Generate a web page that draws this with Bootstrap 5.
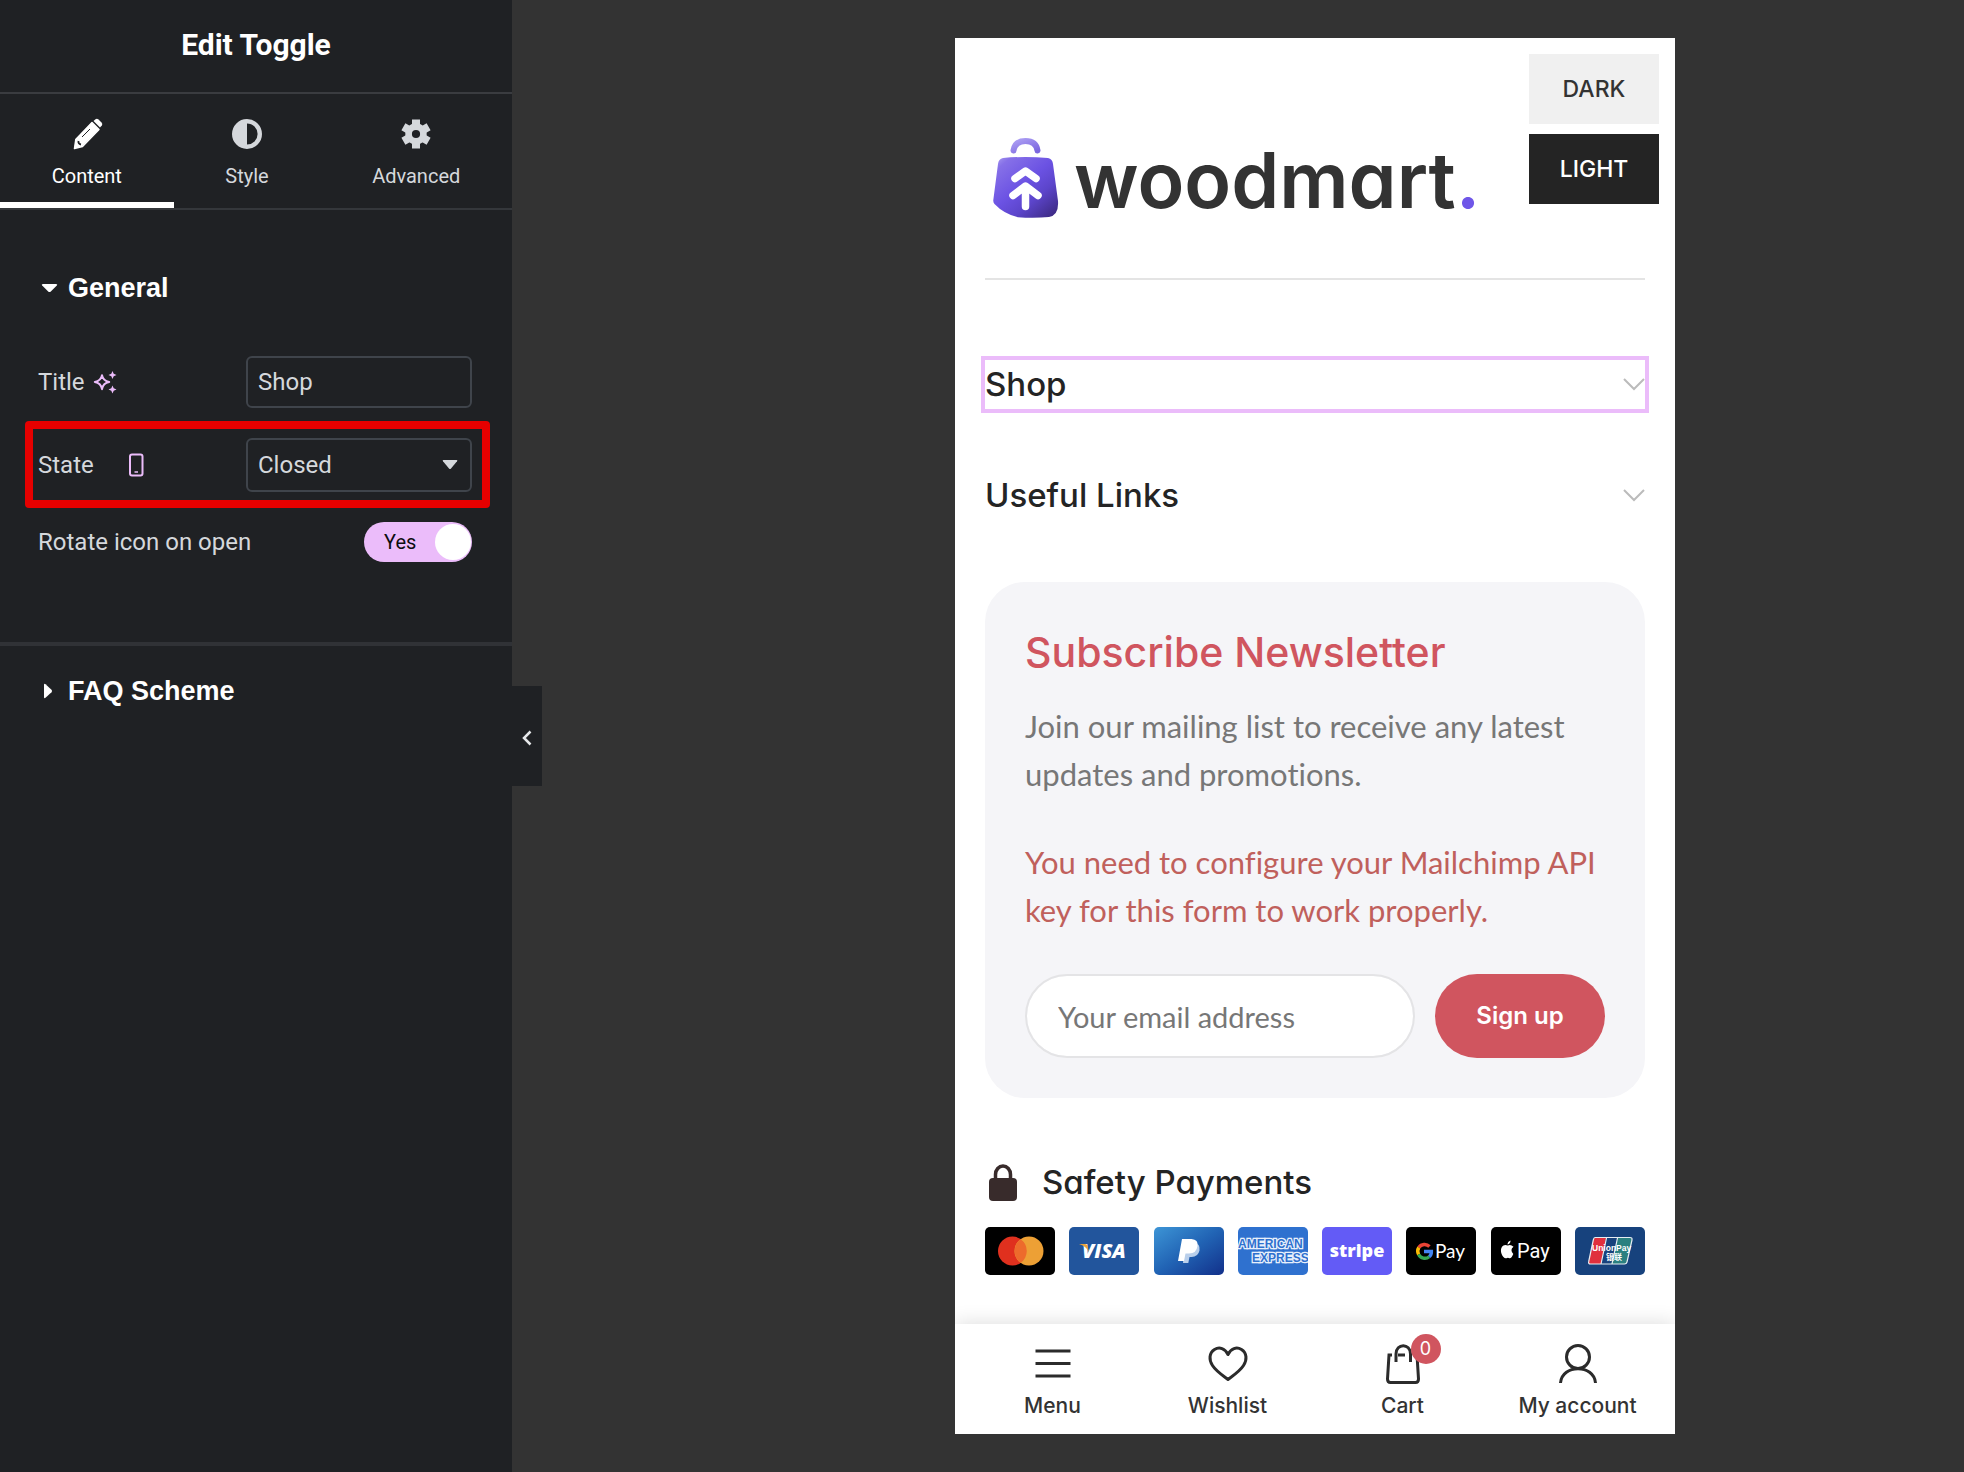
<!DOCTYPE html>
<html lang="en">
<head>
<meta charset="utf-8">
<meta name="viewport" content="width=device-width, initial-scale=1">
<title>Edit Toggle</title>
<link rel="stylesheet" href="https://cdn.jsdelivr.net/npm/bootstrap@5.3.0/dist/css/bootstrap.min.css">
<style>
  body { background: #333; font-family: Lato, sans-serif; }

  /* editor panel */
  .panel { width: 512px; background: #1f2124; color: #d5d8dc; font: 24px/32px Roboto, sans-serif; z-index: 2; }
  .panel-head { height: 94px; padding-bottom: 2px; border-bottom: 2px solid #3a3c40; }
  .panel-head h1 { font-size: 30px; line-height: 36px; }
  .panel-tabs { border-bottom: 2px solid #34373b; }
  .panel-tabs .nav-link { height: 114px; padding: 23px 20px 0; border-bottom: 6px solid transparent; border-radius: 0; color: #d5d8dc; font-size: 20px; line-height: 24px; }
  .panel-tabs .nav-link.active { border-color: #fff; background: none; color: #fff; }
  .panel-tabs svg { width: 34px; height: 34px; margin-bottom: 13px; }
  .fold { padding: 0 40px; height: 90px; gap: 9px; border: 0; background: none; color: #fff; font: bold 27px/32px "Liberation Sans", Arial, sans-serif; }
  .fold svg { width: 19px; height: 18px; }
  .setting { padding: 0 40px 0 38px; }
  .first { padding-top: 23px; }
  .field { width: 226px; height: 52px; padding: 0 10px; border: 2px solid #3f444b; border-radius: 6px; background-color: transparent; color: #d5d8dc; font-size: 24px; line-height: 32px; box-shadow: none; }
  .field:focus { background-color: transparent; color: #d5d8dc; box-shadow: none; }
  select.field { height: 54px; background: url("data:image/svg+xml,%3Csvg xmlns='http://www.w3.org/2000/svg' viewBox='0 0 16 10'%3E%3Cpath d='M1.5 0h13q1.5 0 .5 1.300L9 8.500q-1 1-2 0L1 1.300Q0 0 1.500 0z' fill='%23d5d8dc'/%3E%3C/svg%3E") no-repeat right 12px center / 16px 10px; }
  select.field:focus { background-color: transparent; }
  .hilite { margin: 13px 22px 14px 25px; padding: 9px 10px 8px 5px; border: 8px solid #e60000; border-radius: 4px; }
  .switcher input { width: 108px; height: 40px; margin: 0; border: 0; border-radius: 20px; background: #ebbcfa; appearance: none; display: block; }
  .switcher .knob { right: 1px; top: 2px; width: 36px; height: 36px; background: #fff; }
  .switcher .word { left: 20px; top: 6px; font-size: 20px; line-height: 28px; color: #0c0d0e; }
  .general { padding-top: 33px; border-bottom: 4px solid #303236; padding-bottom: 80px; }
  .collapser { left: 100%; top: 686px; width: 30px; height: 100px; background: #1f2124; border: 0; }

  /* preview */
  .canvas { padding: 38px 0 38px 154px; }
  .phone { max-width: 720px; background: #fff; color: #242424; }
  .scheme { top: 16px; right: 16px; width: 130px; gap: 10px; z-index: 1; }
  .scheme button { height: 70px; border: 0; font: 500 23px/28px Inter, sans-serif; }
  .btn-pale { background: #f0f0f0; color: #333; }
  .btn-ink { background: #242424; color: #fff; }
  .page-body { padding: 100px 30px 49px; }
  .brand-row { height: 80px; padding-left: 8px; gap: 15px; color: #333; }
  .brand-row span { padding-top: 4px; font: 600 77px/80px Inter, sans-serif; font-feature-settings: "cv11"; }
  .brand-row b { color: #6f56e8; font-weight: inherit; }
  .rule { margin: 60px 0 80px; height: 2px; background: #e4e4e4; }
  .round { font-family: Inter, sans-serif; font-feature-settings: "cv11"; font-weight: 500; }
  .fold-row { height: 49px; margin-bottom: 62px; padding: 0; border: 0; background: none; color: #242424; font-size: 33px; line-height: 49px; }
  .fold-row svg { width: 22px; height: 13px; }
  .fold-row.picked { outline: 4px solid #ebbcfa; }
  .news { padding: 40px; border-radius: 40px; background: #f5f5f8; margin-bottom: 61px; font-size: 31px; line-height: 48px; color: #777; font-variant-ligatures: no-common-ligatures; }
  .news h2 { margin-bottom: 20px; color: #d0555f; font-size: 41px; line-height: 60px; }
  .news p { margin-bottom: 40px; }
  .news .warn { color: #c0605c; }
  .news form { gap: 20px; }
  .news input { height: 84px; padding: 0 31px; border: 2px solid #e4e4e6; border-radius: 42px; font-size: 29px; color: #777; }
  .news input::placeholder { color: #777; }
  .news button { width: 170px; height: 84px; border: 0; border-radius: 42px; background: #d0555f; color: #fff; font: 600 24px/30px Inter, sans-serif; }
  .safe { height: 46px; margin-bottom: 22px; padding-left: 4px; gap: 25px; font-size: 33px; line-height: 46px; }
  .safe svg { width: 28px; height: 37px; }
  .pays { gap: 14px; }
  .pays svg { width: 70px; height: 48px; }
  .dock { height: 110px; padding: 18px 10px 0; box-shadow: 0 -2px 18px rgba(0,0,0,.12); clip-path: inset(-30px 0 0 0); background: #fff; }
  .dock a { color: #333; font: 500 21px/28px Inter, sans-serif; gap: 6px; }
  .dock svg { width: 44px; height: 44px; }
  .dock .count { left: 30px; top: -8px; width: 30px; height: 30px; background: #d0555f; color: #fff; font: 18px/30px Inter, sans-serif; }
</style>
</head>
<body>
<div class="d-flex min-vh-100">
  <aside class="panel position-relative flex-shrink-0">
    <header class="panel-head d-flex align-items-center justify-content-center"><h1 class="m-0 fw-bold text-white">Edit Toggle</h1></header>
    <nav class="panel-tabs nav nav-fill flex-nowrap">
      <a class="nav-link active nav-item d-flex flex-column align-items-center" href="#">
        <svg viewBox="0 0 34 34"><path d="M4.500 31.500 5.500 22 22 5.500l7 7L12 29.500z" fill="#fff"/><path d="M4.500 31.500 5.800 22.500 22 5.500l7 7L12.500 29.500z" fill="none" stroke="#fff" stroke-width="1.500" stroke-linejoin="round"/><path d="m23.500 4 2-1.800q1.500-1 3 .3l3 3q1.500 1.500.3 3L30 10.500z" fill="#fff"/><path d="m12 20 8-8" stroke="#1f2124" stroke-width="1" /><path d="M8.500 24q-.5 3 2.500 3.500" fill="none" stroke="#1f2124" stroke-width="1.800"/></svg>
        Content</a>
      <a class="nav-link nav-item d-flex flex-column align-items-center" href="#">
        <svg viewBox="0 0 34 34"><circle cx="17" cy="17" r="12.800" fill="none" stroke="#d5d8dc" stroke-width="4.400"/><path d="M17 3a14 14 0 0 0 0 28z" fill="#d5d8dc"/></svg>
        Style</a>
      <a class="nav-link nav-item d-flex flex-column align-items-center" href="#">
        <svg viewBox="0 0 34 34" fill="none" stroke="#d5d8dc"><circle cx="17" cy="17" r="7.400" stroke-width="6.600"/><g stroke-width="8" stroke-linecap="butt"><path d="M17 2.500V9M17 25v6.500M4.400 9.750l5.600 3.250M24 21l5.600 3.250M4.400 24.250 10 21M24 13l5.600-3.250"/></g></svg>
        Advanced</a>
    </nav>
    <section class="general">
      <button class="fold d-flex align-items-center" type="button"><svg viewBox="0 0 19 18"><path d="M3 5h13q2 0 .8 1.500l-6 6q-1.300 1-2.600 0l-6-6Q1 5 3 5z" fill="#fff"/></svg>General</button>
      <div class="setting first d-flex align-items-center justify-content-between">
        <label for="title" class="d-flex align-items-center">Title <svg width="24" height="24" viewBox="0 0 24 24" class="ms-2"><path d="M9 5.200Q10 11 16.200 12 10 13 9 19.200 8 13 1.800 12 8 11 9 5.200z" fill="none" stroke="#ebbcfa" stroke-width="2" stroke-linejoin="round"/><path d="M19.500 1l1.200 2.800 2.800 1.200-2.800 1.200-1.200 2.800-1.200-2.800-2.800-1.200 2.800-1.200zM19.500 15.500l1.200 2.800 2.800 1.200-2.800 1.200-1.200 2.800-1.200-2.800-2.800-1.200 2.800-1.200z" fill="#ebbcfa"/></svg></label>
        <input class="field form-control" id="title" type="text" value="Shop">
      </div>
      <div class="hilite d-flex align-items-center justify-content-between">
        <label for="state" class="d-flex align-items-center">State <svg class="ms-4" width="34" height="24" viewBox="0 0 34 24"><rect x="12" y="1.500" width="12.500" height="21" rx="2" fill="none" stroke="#ebbcfa" stroke-width="2"/><path d="M16.500 19h3.500" stroke="#ebbcfa" stroke-width="1.500"/></svg></label>
        <select class="field form-select" id="state"><option>Closed</option><option>Open</option></select>
      </div>
      <div class="setting d-flex align-items-center justify-content-between">
        <label for="rotate">Rotate icon on open</label>
        <div class="switcher position-relative">
          <input id="rotate" type="checkbox" role="switch" checked>
          <span class="word position-absolute pe-none">Yes</span><span class="knob position-absolute rounded-circle pe-none"></span>
        </div>
      </div>
    </section>
    <button class="fold d-flex align-items-center" type="button"><svg viewBox="0 0 19 18"><path d="M4 3q0-2 1.500-.8l6 5.500q1.200 1.300 0 2.600l-6 5.500Q4 17 4 15z" fill="#fff"/></svg>FAQ Scheme</button>
    <button class="collapser position-absolute p-0" type="button" aria-label="Collapse panel"><svg width="12" height="18" viewBox="0 0 12 18"><path d="M9.500 2.500 3 9l6.500 6.500" fill="none" stroke="#e6e8ea" stroke-width="2.500"/></svg></button>
  </aside>

  <main class="canvas flex-grow-1">
    <div class="phone position-relative mx-auto">
      <div class="scheme position-absolute d-grid">
        <button class="btn-pale" type="button">DARK</button>
        <button class="btn-ink" type="button">LIGHT</button>
      </div>
      <div class="page-body">
        <div class="brand-row d-flex align-items-center">
          <svg class="flex-shrink-0" width="66" height="80" viewBox="0 0 66 80">
            <defs>
              <linearGradient id="bag" x1="0" y1="0" x2=".9" y2="1"><stop offset="0" stop-color="#b0a3f2"/><stop offset=".14" stop-color="#8670e8"/><stop offset=".48" stop-color="#6b52e3"/><stop offset=".7" stop-color="#5c45cb"/><stop offset="1" stop-color="#3d2a84"/></linearGradient>
              <linearGradient id="grip" x1="0" y1="0" x2="1" y2="1"><stop offset="0" stop-color="#ab9df3"/><stop offset="1" stop-color="#7c67df"/></linearGradient>
            </defs>
            <path d="M20.500 12.500C21.500 6 26 3 32.500 3s11 3 12 9.500" fill="none" stroke="url(#grip)" stroke-width="6" stroke-linecap="round"/>
            <path d="M5 26q.5-5 5-6 22-2 45 0 4.500 1 5 6l5 37q1 14-9 16-14 1.500-31 .3Q11 76 1.500 66 0 64.500.3 62z" fill="url(#bag)"/>
            <path d="M22 40.500 32.500 33 43 40.500M20 57.500 32.500 48 45 57.500M32.500 50v18.500" fill="none" stroke="#fff" stroke-width="7.500" stroke-linecap="round" stroke-linejoin="round"/>
          </svg>
          <span>woodmart<b>.</b></span>
        </div>
        <div class="rule"></div>
        <button class="fold-row round picked d-flex w-100 align-items-center justify-content-between" type="button">Shop <svg viewBox="0 0 22 13"><path d="m1 1 10 10L21 1" fill="none" stroke="#bbb" stroke-width="2"/></svg></button>
        <button class="fold-row round d-flex w-100 align-items-center justify-content-between" type="button">Useful Links <svg viewBox="0 0 22 13"><path d="m1 1 10 10L21 1" fill="none" stroke="#bbb" stroke-width="2"/></svg></button>
        <section class="news">
          <h2 class="round">Subscribe Newsletter</h2>
          <p>Join our mailing list to receive any latest updates and promotions.</p>
          <p class="warn">You need to configure your Mailchimp API key for this form to work properly.</p>
          <form class="d-flex">
            <input class="form-control flex-grow-1" type="email" placeholder="Your email address" aria-label="Your email address">
            <button class="flex-shrink-0" type="button">Sign up</button>
          </form>
        </section>
        <div class="safe round d-flex align-items-center">
          <svg viewBox="0 0 28 37"><path d="M6.500 15V10.500a7.500 8.500 0 0 1 15 0V15" fill="none" stroke="#382b2b" stroke-width="3.500"/><rect y="14" width="28" height="23" rx="4" fill="#382b2b"/></svg>
          Safety Payments
        </div>
        <div class="pays d-flex justify-content-between">
          <svg viewBox="0 0 70 48"><rect width="70" height="48" rx="5" fill="#000"/><circle cx="27.500" cy="24" r="14.500" fill="#e0301e"/><circle cx="44" cy="24" r="14.500" fill="#eda035"/><path d="M35.700 12.200a14.500 14.500 0 0 1 0 23.600 14.500 14.500 0 0 1 0-23.600z" fill="#ed6b2c"/></svg>
          <svg viewBox="0 0 70 48"><rect width="70" height="48" rx="5" fill="#22559c"/><text x="13" y="31" font-family="Open Sans" font-weight="800" font-style="italic" font-size="20" fill="#fff">VISA</text><path d="M10 17h6q2 0 2.500 2l1.500 6q-3-6-10-8z" fill="#e9a33a"/></svg>
          <svg viewBox="0 0 70 48"><defs><linearGradient id="pp" x1="0" y1="0" x2="1" y2="1"><stop offset="0" stop-color="#3d95d6"/><stop offset=".5" stop-color="#2163b4"/><stop offset="1" stop-color="#12308a"/></linearGradient></defs><rect width="70" height="48" rx="5" fill="url(#pp)"/><path d="M31 15.500h9q6.500 1 5.500 8-1.500 6.500-8 6.500h-2l-1.200 6H29z" fill="#b9cfeb"/><path d="M28 12h9.500q7 .5 6 7-1 7.500-8.500 7.500h-3.500L30 34h-6z" fill="#fff"/></svg>
          <svg viewBox="0 0 70 48"><defs><clipPath id="axc"><rect width="70" height="48" rx="5"/></clipPath></defs><g clip-path="url(#axc)"><rect width="70" height="48" fill="#2f71cf"/><g font-family="Liberation Sans" font-weight="bold" font-size="12" fill="#2f71cf" stroke="#e8f0fb" stroke-width="2.500" paint-order="stroke"><text x="0" y="21">AMERICAN</text><text x="14" y="35">EXPRESS</text></g></g></svg>
          <svg viewBox="0 0 70 48"><rect width="70" height="48" rx="5" fill="#635bf6"/><text x="35" y="30" text-anchor="middle" font-family="Open Sans" font-weight="800" font-size="18" fill="#fff">stripe</text></svg>
          <svg viewBox="0 0 70 48"><rect width="70" height="48" rx="5" fill="#000"/><g fill="none" stroke-width="3.400"><path d="M23.500 19.500a7 7 0 0 0-10.700 1" stroke="#ea4335"/><path d="M12.800 20.500a7 7 0 0 0-.2 7" stroke="#fbbc04"/><path d="M12.600 27.500a7 7 0 0 0 10.600 2.200" stroke="#34a853"/><path d="M23.200 29.700q2.300-2 2.200-5.200H18" stroke="#4285f4"/></g><text x="29" y="31" font-family="Lato" font-size="19" fill="#fff">Pay</text></svg>
          <svg viewBox="0 0 70 48"><rect width="70" height="48" rx="5" fill="#000"/><path d="M17 18.500q2.500-1.500 5.500 1.200-4 3-.2 7.300-1.800 4.500-3.800 4.200-1.600-.8-3.200 0C12 32 8 24 11 19.700q2-2.800 6-1.200zM16.500 17.500q0-3 3-4 .2 3-3 4z" fill="#fff"/><text x="26" y="31" font-family="Roboto" font-size="20" fill="#fff">Pay</text></svg>
          <svg viewBox="0 0 70 48"><rect width="70" height="48" rx="5" fill="#17427d"/><path d="M20 11h14l-6 26H15.500q-2.500 0-1.800-2.500l4.600-21.500q.5-2 1.700-2z" fill="#e0303d"/><path d="M31 11h14l-6 26H26z" fill="#17427d"/><path d="M43 11h12q2.500 0 2 2.500l-5 21.500q-.5 2-2.500 2H36z" fill="#2a8080"/><path d="M20 10.500h35q2.500 0 2 2.500l-5 22q-.5 2-2.500 2H15.500q-2.500 0-1.800-2.500l4.600-21.500q.5-2.500 1.700-2.500zM31.500 11 26 37M42.500 11 37 37" fill="none" stroke="#e6edf2" stroke-width="1.200"/><text x="17" y="24" font-family="Liberation Sans" font-weight="bold" font-size="8.500" fill="#fff">UnionPay</text><text x="31" y="33" font-family="Noto Sans CJK SC" font-weight="bold" font-size="8" fill="#fff">银联</text></svg>
        </div>
      </div>
      <nav class="dock d-flex position-relative">
        <a class="d-flex flex-column align-items-center flex-fill w-25 text-decoration-none" href="#"><svg viewBox="0 0 44 44" fill="none" stroke="#2b2b2b" stroke-width="3"><path d="M4.500 9h35M4.500 21.500h35M4.500 34h35"/></svg>Menu</a>
        <a class="d-flex flex-column align-items-center flex-fill w-25 text-decoration-none" href="#"><svg viewBox="0 0 44 44" fill="none" stroke="#2b2b2b" stroke-width="3" stroke-linejoin="round"><path d="M22 12.500C19 6.500 13.500 4.500 8.500 7.500 3 11 2.800 18 6.500 23.500 10 29 16 33 22 37.500c6-4.500 12-8.500 15.500-14C41.200 18 41 11 35.500 7.500c-5-3-10.500-1-13.500 5z"/></svg>Wishlist</a>
        <a class="d-flex flex-column align-items-center flex-fill w-25 text-decoration-none" href="#"><span class="position-relative d-flex"><svg viewBox="0 0 44 44" fill="none" stroke="#2b2b2b" stroke-width="3"><path d="M11 13H8L6.500 37q0 3.500 3 3.500h25q3 0 3-3.500L36 13h-3M17 13h7M15 20v-8C15 1 29.500 1 29.500 12v8"/></svg><span class="count position-absolute rounded-circle text-center">0</span></span>Cart</a>
        <a class="d-flex flex-column align-items-center flex-fill w-25 text-decoration-none" href="#"><svg viewBox="0 0 44 44" fill="none" stroke="#2b2b2b" stroke-width="3"><circle cx="22" cy="15" r="11.500"/><path d="M4.500 41C6 22 38 22 39.500 41"/></svg>My account</a>
      </nav>
    </div>
  </main>
</div>
<script src="https://cdn.jsdelivr.net/npm/bootstrap@5.3.0/dist/js/bootstrap.bundle.min.js"></script>
</body>
</html>
